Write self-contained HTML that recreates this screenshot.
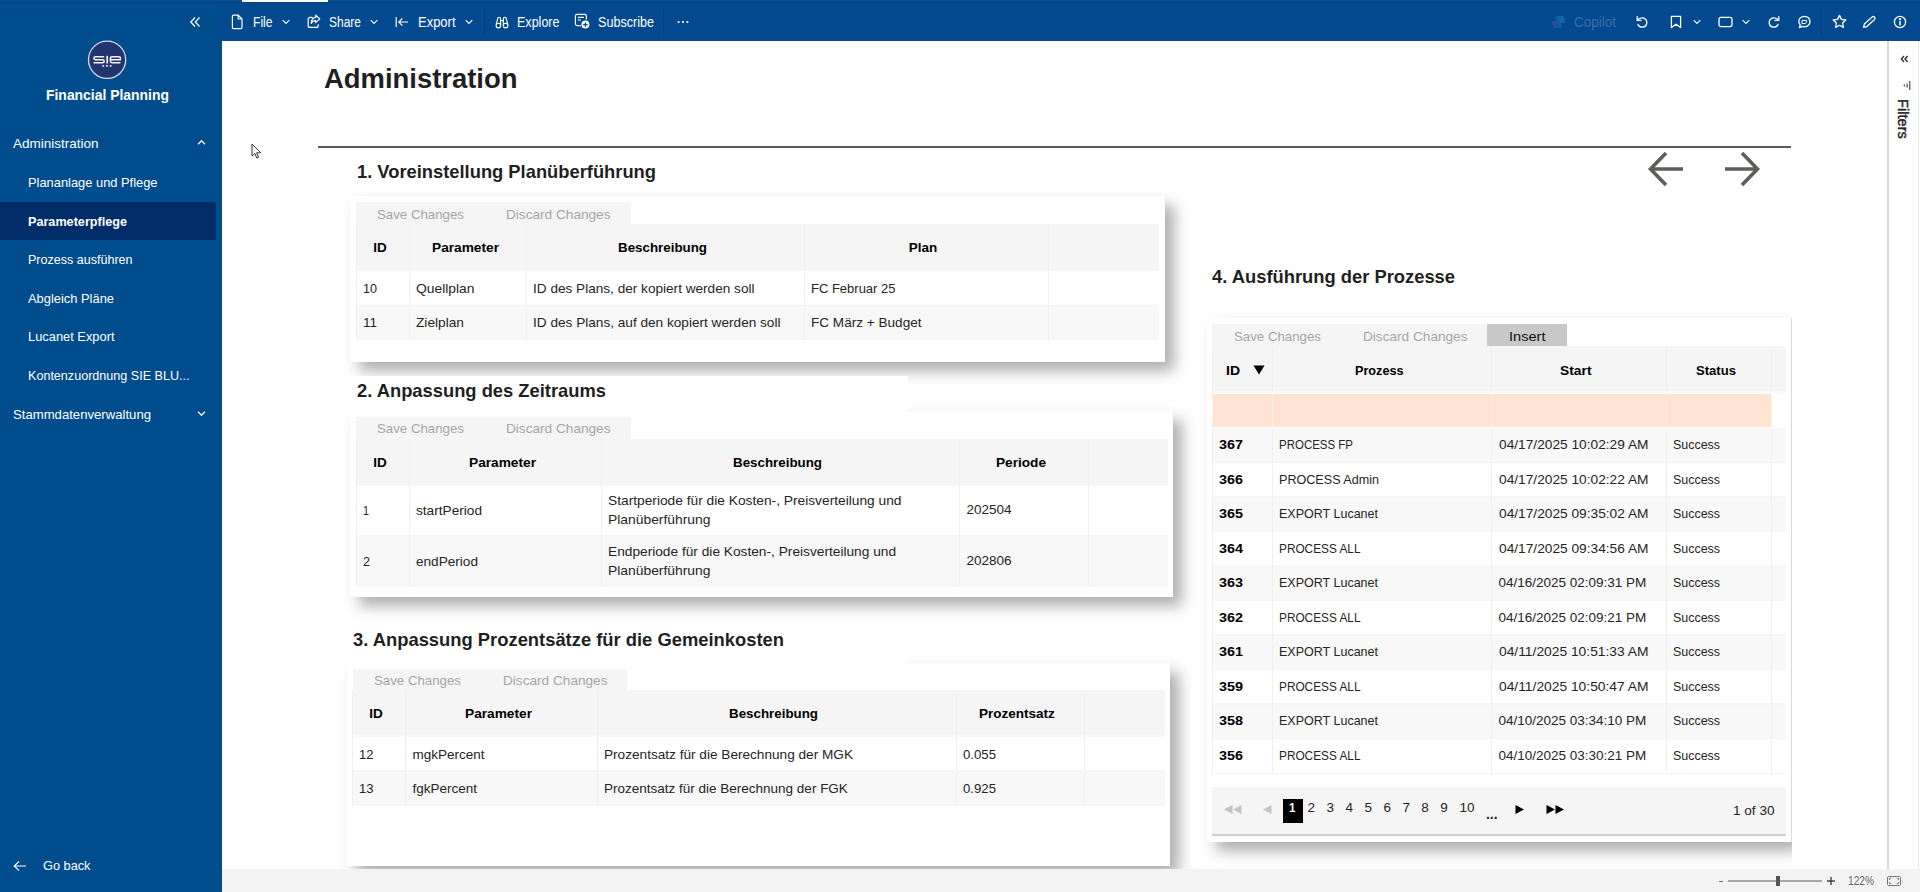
<!DOCTYPE html>
<html><head><meta charset='utf-8'><title>Administration</title><style>
html,body{margin:0;padding:0}
body{width:1920px;height:892px;overflow:hidden;background:#fff;position:relative;font-family:"Liberation Sans",sans-serif;}
body div, body span, body svg{position:absolute;}
span{white-space:pre;transform-origin:0 50%;}
</style></head>
<body>
<div style='left:0px;top:0px;width:222px;height:892px;background:#004c8c;'></div>
<div style='left:220.5px;top:0px;width:1.5px;height:892px;background:#02498f;'></div>
<div style='left:222px;top:0px;width:1698px;height:41px;background:#02498f;'></div>
<div style='left:0px;top:0px;width:1920px;height:2px;background:#004e8f;'></div>
<div style='left:0px;top:2px;width:1920px;height:1px;background:#0b3f78;'></div>
<div style='left:242px;top:0px;width:86px;height:2px;background:#fff;'></div>
<div style='left:222px;top:869px;width:1698px;height:23px;background:#f3f3f3;'></div>
<div style='left:1887px;top:41px;width:33px;height:828px;background:#fff;border-left:2px solid #d9d9d9;box-sizing:border-box;'></div>
<svg style='left:189px;top:16px' width='12' height='12' viewBox='0 0 12 12' fill='none' stroke='#fff' stroke-width='1.2'><path d='M6 1.5 L1.8 6 L6 10.5 M10.5 1.5 L6.3 6 L10.5 10.5'/></svg>
<svg style='left:87px;top:40px' width='40' height='40' viewBox='0 0 40 40' fill='none'><circle cx='20.1' cy='19.8' r='18.6' fill='#22356f' stroke='#d5dae6' stroke-width='1.3'/><g stroke='#f2f4f8' stroke-width='1.5' stroke-linecap='butt' stroke-linejoin='round'><path d='M17.2 16.7 H8.6 Q6.9 16.7 6.9 18.2 Q6.9 19.7 8.6 19.7 H15.4 Q17.2 19.7 17.2 21.2 Q17.2 22.7 15.4 22.7 H6.6'/><path d='M20.2 15.9 V23.5' stroke-width='1.7'/><path d='M23.4 19.7 H33.4 V18.4 Q33.4 16.7 31.6 16.7 H25.2 Q23.4 16.7 23.4 18.4 V21 Q23.4 22.7 25.2 22.7 H33.4'/></g><path d='M15.4 25 h1.7 v1.8 h-1.7z M19.1 25 h1.7 v1.8 h-1.7z M22.8 25 h1.7 v1.8 h-1.7z' fill='#e6e9f0'/></svg>
<div style='left:0px;top:202px;width:216px;height:38px;background:#002d68;'></div>
<svg style='left:197px;top:139.4px' width='9' height='7' viewBox='0 0 9 7' fill='none' stroke='#f0f4fa' stroke-width='1.35'><path d='M1 5.2 L4.5 1.7 L8 5.2'/></svg>
<svg style='left:197px;top:410.4px' width='9' height='7' viewBox='0 0 9 7' fill='none' stroke='#f0f4fa' stroke-width='1.35'><path d='M1 1.7 L4.5 5.2 L8 1.7'/></svg>
<svg style='left:13px;top:859.5px' width='14' height='12' viewBox='0 0 14 12' fill='none' stroke='#fff' stroke-width='1.2'><path d='M13 6 H1.5 M6 1.3 L1.3 6 L6 10.7'/></svg>
<svg style='left:231px;top:14px' width='13' height='16' viewBox='0 0 13 16' fill='none' stroke='#fff' stroke-width='1.2' stroke-linejoin='round'><path d='M2.6 1.2 H7.2 L11 5 V13.4 Q11 14.6 9.8 14.6 H2.6 Q1.4 14.6 1.4 13.4 V2.4 Q1.4 1.2 2.6 1.2 Z M7.2 1.2 V5 H11'/></svg>
<svg style='left:282px;top:19px' width='8' height='6' viewBox='0 0 8 6' fill='none' stroke='#fff' stroke-width='1.1'><path d='M0.7 1.2 L4 4.5 L7.3 1.2'/></svg>
<svg style='left:307px;top:14px' width='14' height='15' viewBox='0 0 14 15' fill='none' stroke='#fff' stroke-width='1.2' stroke-linejoin='round' stroke-linecap='round'><path d='M5.2 3.4 H3.2 Q1.2 3.4 1.2 5.4 V11.4 Q1.2 13.4 3.2 13.4 H9.2 Q11.2 13.4 11.2 11.4 V10.6'/><path d='M8.6 1.2 L12.8 4.9 L8.6 8.6 V6.6 Q5.6 6.4 4.2 9.4 Q4.4 4 8.6 3.4 Z'/></svg>
<svg style='left:370px;top:19px' width='8' height='6' viewBox='0 0 8 6' fill='none' stroke='#fff' stroke-width='1.1'><path d='M0.7 1.2 L4 4.5 L7.3 1.2'/></svg>
<svg style='left:395px;top:16px' width='14' height='12' viewBox='0 0 14 12' fill='none' stroke='#fff' stroke-width='1.2'><path d='M1.2 1 V11 M13 6 H4 M7.4 2.4 L3.8 6 L7.4 9.6'/></svg>
<svg style='left:465px;top:19px' width='8' height='6' viewBox='0 0 8 6' fill='none' stroke='#fff' stroke-width='1.1'><path d='M0.7 1.2 L4 4.5 L7.3 1.2'/></svg>
<div style='left:484px;top:8px;width:1px;height:27px;background:#0a3a78;'></div>
<svg style='left:495px;top:16px' width='14' height='13' viewBox='0 0 14 13' fill='none' stroke='#fff' stroke-width='1.1'><path d='M4.2 1.4 Q5.6 1.4 5.6 2.8 V9.6 M9.8 1.4 Q8.4 1.4 8.4 2.8 V9.6 M5.6 4.6 H8.4'/><path d='M4.2 1.4 Q2.8 1.4 2.6 3 L1.2 8.4 M9.8 1.4 Q11.2 1.4 11.4 3 L12.8 8.4'/><circle cx='3.4' cy='9.6' r='2.3'/><circle cx='10.6' cy='9.6' r='2.3'/></svg>
<svg style='left:574px;top:13px' width='17' height='17' viewBox='0 0 17 17' fill='none' stroke='#fff' stroke-width='1.2'><path d='M7 12.6 H3.2 Q1.4 12.6 1.4 10.8 V3.2 Q1.4 1.4 3.2 1.4 H10.6 Q12.4 1.4 12.4 3.2 V6.4'/><path d='M3.8 4.4 H10 M3.8 7 H7'/><circle cx='11.4' cy='11.6' r='4' fill='#fff' stroke='none'/><path d='M11.4 9.4 V13.8 M9.2 11.6 H13.6' stroke='#02498f' stroke-width='1.3'/></svg>
<div style='left:663px;top:8px;width:1px;height:27px;background:#0a3a78;'></div>
<svg style='left:677px;top:20px' width='12' height='4' viewBox='0 0 12 4' fill='#fff'><circle cx='1.6' cy='2' r='1.1'/><circle cx='6' cy='2' r='1.1'/><circle cx='10.4' cy='2' r='1.1'/></svg>
<svg style='left:1551px;top:15px;opacity:.35' width='15' height='14' viewBox='0 0 15 14'><path d='M4 1 H8 L11 13 H7 Z' fill='#2a78c8'/><path d='M7 1 H11 Q12.6 1 13 2.6 L14 6 Q14.4 8 12.4 8 H9.4 Z' fill='#3a9ad8'/><path d='M1 8 Q.6 6 2.6 6 H5.6 L8 13 H4 Q2.4 13 2 11.4 Z' fill='#6a58c8'/></svg>
<svg style='left:1635px;top:15px' width='14' height='14' viewBox='0 0 14 14' fill='none' stroke='#fff' stroke-width='1.3' stroke-linecap='round' stroke-linejoin='round'><path d='M2.2 1.6 V5.4 H6 M2.4 5.2 Q4.4 2.6 7.4 2.8 Q11.8 3.4 11.8 7.6 Q11.6 11.8 7.4 12.2 Q4.2 12.2 3 9.4'/></svg>
<svg style='left:1670px;top:15px' width='12' height='14' viewBox='0 0 12 14' fill='none' stroke='#fff' stroke-width='1.3' stroke-linecap='round' stroke-linejoin='round'><path d='M1.4 1.4 H10.6 V12.6 L6 9.2 L1.4 12.6 Z'/></svg>
<svg style='left:1693px;top:19px' width='8' height='6' viewBox='0 0 8 6' fill='none' stroke='#fff' stroke-width='1.1'><path d='M0.7 1.2 L4 4.5 L7.3 1.2'/></svg>
<svg style='left:1718px;top:16px' width='15' height='12' viewBox='0 0 15 12' fill='none' stroke='#fff' stroke-width='1.3' stroke-linecap='round' stroke-linejoin='round'><rect x='1' y='1.4' width='13' height='9.2' rx='2'/></svg>
<svg style='left:1742px;top:19px' width='8' height='6' viewBox='0 0 8 6' fill='none' stroke='#fff' stroke-width='1.1'><path d='M0.7 1.2 L4 4.5 L7.3 1.2'/></svg>
<svg style='left:1767px;top:15px' width='14' height='14' viewBox='0 0 14 14' fill='none' stroke='#fff' stroke-width='1.3' stroke-linecap='round' stroke-linejoin='round'><path d='M11.8 1.6 V5.4 H8 M11.6 5.2 Q9.6 2.6 6.6 2.8 Q2.2 3.4 2.2 7.6 Q2.4 11.8 6.6 12.2 Q9.8 12.2 11 9.4'/></svg>
<svg style='left:1797px;top:15px' width='15' height='14' viewBox='0 0 15 14' fill='none' stroke='#fff' stroke-width='1.3' stroke-linecap='round' stroke-linejoin='round'><path d='M2.4 12.6 L3.2 9.8 Q1.6 8 1.8 6 Q2.6 1.6 7.4 1.4 Q12.6 1.6 13 6.6 Q12.6 11.4 7.4 11.8 Q6 11.8 5 11.4 Z'/><path d='M5.4 5.4 H9.6 V7.2 L8 8.6 H5.4 Z' stroke-width='1'/></svg>
<div style='left:1821px;top:8px;width:1px;height:27px;background:#0a3a78;'></div>
<svg style='left:1832px;top:14px' width='15' height='15' viewBox='0 0 15 15' fill='none' stroke='#fff' stroke-width='1.3' stroke-linecap='round' stroke-linejoin='round'><path d='M7.5 1.4 L9.4 5.4 L13.8 6 L10.6 9 L11.4 13.4 L7.5 11.3 L3.6 13.4 L4.4 9 L1.2 6 L5.6 5.4 Z'/></svg>
<svg style='left:1862px;top:15px' width='15' height='14' viewBox='0 0 15 14' fill='none' stroke='#fff' stroke-width='1.3' stroke-linecap='round' stroke-linejoin='round'><path d='M1.6 12.4 L2.4 9 L10.4 1.8 Q11.6 1 12.6 2.2 Q13.6 3.4 12.6 4.4 L4.8 11.6 Z'/></svg>
<svg style='left:1893px;top:15px' width='14' height='14' viewBox='0 0 14 14' fill='none' stroke='#fff' stroke-width='1.3' stroke-linecap='round' stroke-linejoin='round'><circle cx='7' cy='7' r='5.6'/><path d='M7 6.4 V10' stroke-width='1.5'/><circle cx='7' cy='4.2' r='.5' fill='#fff'/></svg>
<svg style='left:1899.5px;top:54.5px' width='9' height='8' viewBox='0 0 9 8' fill='none' stroke='#333' stroke-width='1.4'><path d='M4 1 L1.4 4 L4 7 M7.6 1 L5 4 L7.6 7'/></svg>
<svg style='left:1901px;top:80px' width='11' height='11' viewBox='0 0 11 11' fill='none' stroke='#3a3a3a' stroke-width='1.1'><path d='M8.8 1 V10 M6.1 3.4 V7.6 M3.3 4.6 V6.4'/></svg>
<div style='left:1893px;top:99px;width:20px;height:41px;'><div style='position:absolute;left:10px;top:20px;transform:translate(-50%,-50%) rotate(90deg);font-size:14.5px;font-weight:400;color:#252423;white-space:nowrap;letter-spacing:0.05px;-webkit-text-stroke:.45px #252423;'>Filters</div></div>
<div style='left:1918px;top:41px;width:1px;height:828px;background:#e8e8e8;'></div>
<div style='left:1719px;top:880.5px;width:4px;height:1px;background:#666;'></div>
<div style='left:1728px;top:880px;width:94px;height:1.5px;background:#a8a8a8;'></div>
<div style='left:1776px;top:876px;width:4px;height:10px;background:#555;'></div>
<svg style='left:1827px;top:877px' width='8' height='8' viewBox='0 0 8 8' stroke='#444' stroke-width='1.4'><path d='M0 4 H8 M4 0 V8'/></svg>
<svg style='left:1887px;top:876px' width='14' height='10' viewBox='0 0 14 10' fill='none' stroke='#777' stroke-width='1'><rect x='.5' y='.5' width='13' height='9' rx='1'/><path d='M2.4 4 V2.4 H4.2 M9.8 2.4 H11.6 V4 M11.6 6 V7.6 H9.8 M4.2 7.6 H2.4 V6'/></svg>
<div id='canvas' style='left:222px;top:41px;width:1570px;height:828px;overflow:hidden'>
<div style='left:96px;top:105px;width:1473px;height:2px;background:#5a5a5a;'></div>
<svg style='left:1423.7px;top:108.9px' width='40' height='38' viewBox='0 0 40 38' fill='none' stroke='#605e5c' stroke-width='3.6'><path d='M37 19 H5 M20 3 L4.5 19 L20 35'/></svg>
<svg style='left:1500px;top:108.9px' width='40' height='38' viewBox='0 0 40 38' fill='none' stroke='#605e5c' stroke-width='3.6'><path d='M3 19 H35 M20 3 L35.5 19 L20 35'/></svg>
<div style='left:128px;top:155px;width:815px;height:166px;background:#fff;box-shadow:9px 9px 14px rgba(0,0,0,.32);'></div>
<div style='left:134px;top:161px;width:275px;height:22px;background:#f5f5f5;'></div>
<div style='left:134px;top:183px;width:803px;height:46px;background:#f5f5f5;'></div>
<div style='left:134px;top:230px;width:803px;height:34px;background:#fff;'></div>
<div style='left:134px;top:265px;width:803px;height:33px;background:#f8f8f8;'></div>
<div style='left:186.5px;top:183px;width:1px;height:46px;background:#efefef;'></div>
<div style='left:186.5px;top:229px;width:1.2px;height:69px;background:#f0f0f0;'></div>
<div style='left:303.5px;top:183px;width:1px;height:46px;background:#efefef;'></div>
<div style='left:303.5px;top:229px;width:1.2px;height:69px;background:#f0f0f0;'></div>
<div style='left:581.5px;top:183px;width:1px;height:46px;background:#efefef;'></div>
<div style='left:581.5px;top:229px;width:1.2px;height:69px;background:#f0f0f0;'></div>
<div style='left:825.5px;top:183px;width:1px;height:46px;background:#efefef;'></div>
<div style='left:825.5px;top:229px;width:1.2px;height:69px;background:#f0f0f0;'></div>
<div style='left:134px;top:228.5px;width:803px;height:1.5px;background:#f8f8f8;'></div>
<div style='left:134px;top:263.5px;width:803px;height:1.5px;background:#f6f6f6;'></div>
<div style='left:134px;top:297.5px;width:803px;height:1.5px;background:#f6f6f6;'></div>
<div style='left:133.5px;top:183px;width:1px;height:115px;background:#f0f0f0;'></div>
<div style='left:128px;top:370px;width:823px;height:186px;background:#fff;box-shadow:9px 9px 14px rgba(0,0,0,.32);'></div>
<div style='left:128px;top:335px;width:558px;height:35px;background:#fff;'></div>
<div style='left:134px;top:376px;width:275px;height:22px;background:#f5f5f5;'></div>
<div style='left:134px;top:398px;width:812px;height:46px;background:#f5f5f5;'></div>
<div style='left:134px;top:445px;width:812px;height:49px;background:#fff;'></div>
<div style='left:134px;top:495px;width:812px;height:49.5px;background:#f8f8f8;'></div>
<div style='left:186.5px;top:398px;width:1px;height:46px;background:#efefef;'></div>
<div style='left:186.5px;top:444px;width:1.2px;height:100.5px;background:#f0f0f0;'></div>
<div style='left:379.0px;top:398px;width:1px;height:46px;background:#efefef;'></div>
<div style='left:379.0px;top:444px;width:1.2px;height:100.5px;background:#f0f0f0;'></div>
<div style='left:737.0px;top:398px;width:1px;height:46px;background:#efefef;'></div>
<div style='left:737.0px;top:444px;width:1.2px;height:100.5px;background:#f0f0f0;'></div>
<div style='left:865.5px;top:398px;width:1px;height:46px;background:#efefef;'></div>
<div style='left:865.5px;top:444px;width:1.2px;height:100.5px;background:#f0f0f0;'></div>
<div style='left:134px;top:443.5px;width:812px;height:1.5px;background:#f8f8f8;'></div>
<div style='left:134px;top:493.5px;width:812px;height:1.5px;background:#f6f6f6;'></div>
<div style='left:134px;top:544.0px;width:812px;height:1.5px;background:#f6f6f6;'></div>
<div style='left:133.5px;top:398px;width:1px;height:146.5px;background:#f0f0f0;'></div>
<div style='left:124.5px;top:622px;width:823px;height:202.5px;background:#fff;box-shadow:9px 9px 14px rgba(0,0,0,.32);'></div>
<div style='left:124.5px;top:587px;width:560px;height:35px;background:#fff;'></div>
<div style='left:130.5px;top:628px;width:274.5px;height:20.5px;background:#f5f5f5;'></div>
<div style='left:130.5px;top:648.5px;width:812.0px;height:46.0px;background:#f5f5f5;'></div>
<div style='left:130.5px;top:695.5px;width:812.0px;height:34.0px;background:#fff;'></div>
<div style='left:130.5px;top:730.5px;width:812.0px;height:33.0px;background:#f8f8f8;'></div>
<div style='left:182.5px;top:648.5px;width:1px;height:46.0px;background:#efefef;'></div>
<div style='left:182.5px;top:694.5px;width:1.2px;height:69.0px;background:#f0f0f0;'></div>
<div style='left:375.0px;top:648.5px;width:1px;height:46.0px;background:#efefef;'></div>
<div style='left:375.0px;top:694.5px;width:1.2px;height:69.0px;background:#f0f0f0;'></div>
<div style='left:734.0px;top:648.5px;width:1px;height:46.0px;background:#efefef;'></div>
<div style='left:734.0px;top:694.5px;width:1.2px;height:69.0px;background:#f0f0f0;'></div>
<div style='left:861.5px;top:648.5px;width:1px;height:46.0px;background:#efefef;'></div>
<div style='left:861.5px;top:694.5px;width:1.2px;height:69.0px;background:#f0f0f0;'></div>
<div style='left:130.5px;top:694.0px;width:812.0px;height:1.5px;background:#f8f8f8;'></div>
<div style='left:130.5px;top:729.0px;width:812.0px;height:1.5px;background:#f6f6f6;'></div>
<div style='left:130.5px;top:763.0px;width:812.0px;height:1.5px;background:#f6f6f6;'></div>
<div style='left:130.0px;top:648.5px;width:1px;height:115.0px;background:#f0f0f0;'></div>
<div style='left:985px;top:277px;width:584.5px;height:524px;background:#fff;box-shadow:9px 9px 14px rgba(0,0,0,.32);'></div>
<div style='left:1569.3px;top:277px;width:0.9px;height:524px;background:#dadada;'></div>
<div style='left:990px;top:283px;width:275px;height:22.5px;background:#f5f5f5;'></div>
<div style='left:1265px;top:283px;width:80px;height:22.5px;background:#c8c8c8;'></div>
<div style='left:990px;top:305px;width:573.5px;height:45.5px;background:#f5f5f5;'></div>
<div style='left:990px;top:352.5px;width:559.5px;height:33.5px;background:#ffe4d4;'></div>
<div style='left:990px;top:387.5px;width:573.5px;height:33.55000000000001px;background:#f8f8f8;'></div>
<div style='left:990px;top:420.55px;width:573.5px;height:1.5px;background:#f6f6f6;'></div>
<div style='left:990px;top:422.05px;width:573.5px;height:33.55000000000001px;background:#fff;'></div>
<div style='left:990px;top:455.1px;width:573.5px;height:1.5px;background:#f6f6f6;'></div>
<div style='left:990px;top:456.6px;width:573.5px;height:33.549999999999955px;background:#f8f8f8;'></div>
<div style='left:990px;top:489.65px;width:573.5px;height:1.5px;background:#f6f6f6;'></div>
<div style='left:990px;top:491.15px;width:573.5px;height:33.55000000000007px;background:#fff;'></div>
<div style='left:990px;top:524.2px;width:573.5px;height:1.5px;background:#f6f6f6;'></div>
<div style='left:990px;top:525.7px;width:573.5px;height:33.549999999999955px;background:#f8f8f8;'></div>
<div style='left:990px;top:558.75px;width:573.5px;height:1.5px;background:#f6f6f6;'></div>
<div style='left:990px;top:560.25px;width:573.5px;height:33.549999999999955px;background:#fff;'></div>
<div style='left:990px;top:593.3px;width:573.5px;height:1.5px;background:#f6f6f6;'></div>
<div style='left:990px;top:594.8px;width:573.5px;height:33.549999999999955px;background:#f8f8f8;'></div>
<div style='left:990px;top:627.8499999999999px;width:573.5px;height:1.5px;background:#f6f6f6;'></div>
<div style='left:990px;top:629.3499999999999px;width:573.5px;height:33.55000000000007px;background:#fff;'></div>
<div style='left:990px;top:662.4px;width:573.5px;height:1.5px;background:#f6f6f6;'></div>
<div style='left:990px;top:663.9px;width:573.5px;height:33.55000000000007px;background:#f8f8f8;'></div>
<div style='left:990px;top:696.95px;width:573.5px;height:1.5px;background:#f6f6f6;'></div>
<div style='left:990px;top:698.45px;width:573.5px;height:33.549999999999955px;background:#fff;'></div>
<div style='left:990px;top:731.5px;width:573.5px;height:1.5px;background:#f6f6f6;'></div>
<div style='left:1049.5px;top:305px;width:1px;height:45.5px;background:#efefef;'></div>
<div style='left:1049.5px;top:352px;width:1.2px;height:34px;background:#fff0e6;'></div>
<div style='left:1049.5px;top:387px;width:1.2px;height:345.0px;background:#f0f0f0;'></div>
<div style='left:1269.0px;top:305px;width:1px;height:45.5px;background:#efefef;'></div>
<div style='left:1269.0px;top:352px;width:1.2px;height:34px;background:#fff0e6;'></div>
<div style='left:1269.0px;top:387px;width:1.2px;height:345.0px;background:#f0f0f0;'></div>
<div style='left:1444.0px;top:305px;width:1px;height:45.5px;background:#efefef;'></div>
<div style='left:1444.0px;top:352px;width:1.2px;height:34px;background:#fff0e6;'></div>
<div style='left:1444.0px;top:387px;width:1.2px;height:345.0px;background:#f0f0f0;'></div>
<div style='left:1549.0px;top:305px;width:1px;height:45.5px;background:#efefef;'></div>
<div style='left:1549.0px;top:352px;width:1.2px;height:34px;background:#fff0e6;'></div>
<div style='left:1549.0px;top:387px;width:1.2px;height:345.0px;background:#f0f0f0;'></div>
<div style='left:990px;top:350px;width:573.5px;height:2.5px;background:#fafafa;'></div>
<div style='left:990px;top:386px;width:573.5px;height:1.5px;background:#fafafa;'></div>
<div style='left:989.5px;top:305px;width:1px;height:427.0px;background:#f0f0f0;'></div>
<svg style='left:1031px;top:324px' width='12' height='10' viewBox='0 0 12 10'><path d='M0.5 0.5 H11.5 L6 9.5 Z' fill='#000'/></svg>
<div style='left:990px;top:746px;width:573.5px;height:46.5px;background:#f5f5f5;border-bottom:2px solid #cfcfcf;box-sizing:content-box;'></div>
<svg style='left:1001.5px;top:764px' width='18' height='9' viewBox='0 0 18 9' fill='#c4c4c4'><path d='M8.5 0 V9 L0 4.5 Z M17.5 0 V9 L9 4.5 Z'/></svg>
<svg style='left:1041px;top:764px' width='9' height='9' viewBox='0 0 9 9' fill='#c4c4c4'><path d='M8.5 0 V9 L0 4.5 Z'/></svg>
<div style='left:1061px;top:757.5px;width:19.5px;height:24.5px;background:#000;'></div>
<svg style='left:1292.5px;top:764px' width='9' height='9' viewBox='0 0 9 9' fill='#000'><path d='M0.5 0 V9 L9 4.5 Z'/></svg>
<svg style='left:1323.5px;top:764px' width='18' height='9' viewBox='0 0 18 9' fill='#000'><path d='M0.5 0 V9 L9 4.5 Z M9.5 0 V9 L18 4.5 Z'/></svg>
<span style='left:102.00px;top:20.00px;line-height:36px;font-size:28px;font-weight:700;color:#1f1f1f;transform:scaleX(0.9794);'>Administration</span>
<span style='left:134.50px;top:119.00px;line-height:24px;font-size:18.5px;font-weight:700;color:#1f1f1f;transform:scaleX(0.9905);'>1. Voreinstellung Planüberführung</span>
<span style='left:155.00px;top:164.60px;line-height:18px;font-size:13.5px;font-weight:400;color:#a6a6a6;transform:scaleX(0.9824);'>Save Changes</span>
<span style='left:284.00px;top:164.60px;line-height:18px;font-size:13.5px;font-weight:400;color:#a6a6a6;transform:scaleX(1.0091);'>Discard Changes</span>
<span style='left:151.25px;top:198.20px;line-height:18px;font-size:13.5px;font-weight:700;color:#000;'>ID</span>
<span style='left:209.50px;top:198.20px;line-height:18px;font-size:13.5px;font-weight:700;color:#000;transform:scaleX(1.0144);'>Parameter</span>
<span style='left:396.00px;top:198.20px;line-height:18px;font-size:13.5px;font-weight:700;color:#000;transform:scaleX(0.9885);'>Beschreibung</span>
<span style='left:686.75px;top:198.20px;line-height:18px;font-size:13.5px;font-weight:700;color:#000;'>Plan</span>
<span style='left:141.00px;top:238.50px;line-height:18px;font-size:13.5px;font-weight:400;color:#252423;transform:scaleX(0.9314);'>10</span>
<span style='left:194.00px;top:238.50px;line-height:18px;font-size:13.5px;font-weight:400;color:#252423;transform:scaleX(1.0255);'>Quellplan</span>
<span style='left:311.00px;top:238.50px;line-height:18px;font-size:13.5px;font-weight:400;color:#252423;transform:scaleX(1.0075);'>ID des Plans, der kopiert werden soll</span>
<span style='left:589.00px;top:238.50px;line-height:18px;font-size:13.5px;font-weight:400;color:#252423;transform:scaleX(0.9624);'>FC Februar 25</span>
<span style='left:141.00px;top:272.50px;line-height:18px;font-size:13.5px;font-weight:400;color:#252423;'>11</span>
<span style='left:194.00px;top:272.50px;line-height:18px;font-size:13.5px;font-weight:400;color:#252423;transform:scaleX(1.0152);'>Zielplan</span>
<span style='left:311.00px;top:272.50px;line-height:18px;font-size:13.5px;font-weight:400;color:#252423;transform:scaleX(1.0086);'>ID des Plans, auf den kopiert werden soll</span>
<span style='left:589.00px;top:272.50px;line-height:18px;font-size:13.5px;font-weight:400;color:#252423;transform:scaleX(1.0053);'>FC März + Budget</span>
<span style='left:134.50px;top:338.00px;line-height:24px;font-size:18.5px;font-weight:700;color:#1f1f1f;transform:scaleX(0.9913);'>2. Anpassung des Zeitraums</span>
<span style='left:155.00px;top:379.10px;line-height:18px;font-size:13.5px;font-weight:400;color:#a6a6a6;transform:scaleX(0.9824);'>Save Changes</span>
<span style='left:284.00px;top:379.10px;line-height:18px;font-size:13.5px;font-weight:400;color:#a6a6a6;transform:scaleX(1.0091);'>Discard Changes</span>
<span style='left:151.25px;top:413.20px;line-height:18px;font-size:13.5px;font-weight:700;color:#000;'>ID</span>
<span style='left:246.50px;top:413.20px;line-height:18px;font-size:13.5px;font-weight:700;color:#000;transform:scaleX(1.0144);'>Parameter</span>
<span style='left:511.00px;top:413.20px;line-height:18px;font-size:13.5px;font-weight:700;color:#000;transform:scaleX(0.9885);'>Beschreibung</span>
<span style='left:774.00px;top:413.20px;line-height:18px;font-size:13.5px;font-weight:700;color:#000;transform:scaleX(1.0095);'>Periode</span>
<span style='left:141.00px;top:460.50px;line-height:18px;font-size:13.5px;font-weight:400;color:#252423;transform:scaleX(0.7983);'>1</span>
<span style='left:194.00px;top:460.50px;line-height:18px;font-size:13.5px;font-weight:400;color:#252423;transform:scaleX(1.0110);'>startPeriod</span>
<span style='left:385.50px;top:451.00px;line-height:18px;font-size:13.5px;font-weight:400;color:#252423;transform:scaleX(1.0185);'>Startperiode für die Kosten-, Preisverteilung und</span>
<span style='left:385.50px;top:470.00px;line-height:18px;font-size:13.5px;font-weight:400;color:#252423;transform:scaleX(1.0268);'>Planüberführung</span>
<span style='left:744.50px;top:459.80px;line-height:18px;font-size:13.5px;font-weight:400;color:#252423;'>202504</span>
<span style='left:141.00px;top:511.50px;line-height:18px;font-size:13.5px;font-weight:400;color:#252423;transform:scaleX(0.9314);'>2</span>
<span style='left:194.00px;top:511.50px;line-height:18px;font-size:13.5px;font-weight:400;color:#252423;transform:scaleX(1.0071);'>endPeriod</span>
<span style='left:385.50px;top:501.50px;line-height:18px;font-size:13.5px;font-weight:400;color:#252423;transform:scaleX(1.0153);'>Endperiode für die Kosten-, Preisverteilung und</span>
<span style='left:385.50px;top:520.50px;line-height:18px;font-size:13.5px;font-weight:400;color:#252423;transform:scaleX(1.0268);'>Planüberführung</span>
<span style='left:744.50px;top:510.80px;line-height:18px;font-size:13.5px;font-weight:400;color:#252423;'>202806</span>
<span style='left:130.50px;top:586.50px;line-height:24px;font-size:18.5px;font-weight:700;color:#1f1f1f;transform:scaleX(0.9927);'>3. Anpassung Prozentsätze für die Gemeinkosten</span>
<span style='left:151.50px;top:630.60px;line-height:18px;font-size:13.5px;font-weight:400;color:#a6a6a6;transform:scaleX(0.9824);'>Save Changes</span>
<span style='left:280.50px;top:630.60px;line-height:18px;font-size:13.5px;font-weight:400;color:#a6a6a6;transform:scaleX(1.0091);'>Discard Changes</span>
<span style='left:147.25px;top:664.20px;line-height:18px;font-size:13.5px;font-weight:700;color:#000;'>ID</span>
<span style='left:243.00px;top:664.20px;line-height:18px;font-size:13.5px;font-weight:700;color:#000;transform:scaleX(1.0144);'>Parameter</span>
<span style='left:507.00px;top:664.20px;line-height:18px;font-size:13.5px;font-weight:700;color:#000;transform:scaleX(0.9885);'>Beschreibung</span>
<span style='left:757.00px;top:664.20px;line-height:18px;font-size:13.5px;font-weight:700;color:#000;'>Prozentsatz</span>
<span style='left:137.00px;top:704.50px;line-height:18px;font-size:13.5px;font-weight:400;color:#252423;transform:scaleX(0.9647);'>12</span>
<span style='left:190.50px;top:704.50px;line-height:18px;font-size:13.5px;font-weight:400;color:#252423;'>mgkPercent</span>
<span style='left:382.00px;top:704.50px;line-height:18px;font-size:13.5px;font-weight:400;color:#252423;transform:scaleX(1.0085);'>Prozentsatz für die Berechnung der MGK</span>
<span style='left:740.50px;top:704.50px;line-height:18px;font-size:13.5px;font-weight:400;color:#252423;transform:scaleX(0.9764);'>0.055</span>
<span style='left:137.00px;top:738.50px;line-height:18px;font-size:13.5px;font-weight:400;color:#252423;transform:scaleX(0.9647);'>13</span>
<span style='left:190.50px;top:738.50px;line-height:18px;font-size:13.5px;font-weight:400;color:#252423;'>fgkPercent</span>
<span style='left:382.00px;top:738.50px;line-height:18px;font-size:13.5px;font-weight:400;color:#252423;'>Prozentsatz für die Berechnung der FGK</span>
<span style='left:740.50px;top:738.50px;line-height:18px;font-size:13.5px;font-weight:400;color:#252423;transform:scaleX(0.9764);'>0.925</span>
<span style='left:990.00px;top:224.00px;line-height:24px;font-size:18.5px;font-weight:700;color:#1f1f1f;transform:scaleX(0.9918);'>4. Ausführung der Prozesse</span>
<span style='left:1011.50px;top:286.70px;line-height:18px;font-size:13.5px;font-weight:400;color:#a6a6a6;transform:scaleX(0.9824);'>Save Changes</span>
<span style='left:1140.50px;top:286.70px;line-height:18px;font-size:13.5px;font-weight:400;color:#a6a6a6;transform:scaleX(1.0091);'>Discard Changes</span>
<span style='left:1287.00px;top:286.70px;line-height:18px;font-size:13.5px;font-weight:400;color:#111;transform:scaleX(1.0810);'>Insert</span>
<span style='left:1004.00px;top:320.60px;line-height:18px;font-size:13.5px;font-weight:700;color:#000;transform:scaleX(1.0370);'>ID</span>
<span style='left:1132.75px;top:320.60px;line-height:18px;font-size:13.5px;font-weight:700;color:#000;transform:scaleX(0.9366);'>Prozess</span>
<span style='left:1338.25px;top:320.60px;line-height:18px;font-size:13.5px;font-weight:700;color:#000;transform:scaleX(1.0239);'>Start</span>
<span style='left:1474.00px;top:320.60px;line-height:18px;font-size:13.5px;font-weight:700;color:#000;transform:scaleX(0.9693);'>Status</span>
<span style='left:996.50px;top:395.00px;line-height:18px;font-size:13.5px;font-weight:700;color:#000;transform:scaleX(1.0652);'>367</span>
<span style='left:1056.50px;top:395.00px;line-height:18px;font-size:13.5px;font-weight:400;color:#252423;transform:scaleX(0.8503);'>PROCESS FP</span>
<span style='left:1276.50px;top:395.00px;line-height:18px;font-size:13.5px;font-weight:400;color:#252423;transform:scaleX(1.0161);'>04/17/2025 10:02:29 AM</span>
<span style='left:1451.00px;top:395.00px;line-height:18px;font-size:13.5px;font-weight:400;color:#252423;transform:scaleX(0.9210);'>Success</span>
<span style='left:996.50px;top:429.55px;line-height:18px;font-size:13.5px;font-weight:700;color:#000;transform:scaleX(1.0652);'>366</span>
<span style='left:1056.50px;top:429.55px;line-height:18px;font-size:13.5px;font-weight:400;color:#252423;transform:scaleX(0.9320);'>PROCESS Admin</span>
<span style='left:1276.50px;top:429.55px;line-height:18px;font-size:13.5px;font-weight:400;color:#252423;transform:scaleX(1.0161);'>04/17/2025 10:02:22 AM</span>
<span style='left:1451.00px;top:429.55px;line-height:18px;font-size:13.5px;font-weight:400;color:#252423;transform:scaleX(0.9210);'>Success</span>
<span style='left:996.50px;top:464.10px;line-height:18px;font-size:13.5px;font-weight:700;color:#000;transform:scaleX(1.0652);'>365</span>
<span style='left:1056.50px;top:464.10px;line-height:18px;font-size:13.5px;font-weight:400;color:#252423;transform:scaleX(0.9267);'>EXPORT Lucanet</span>
<span style='left:1276.50px;top:464.10px;line-height:18px;font-size:13.5px;font-weight:400;color:#252423;transform:scaleX(1.0161);'>04/17/2025 09:35:02 AM</span>
<span style='left:1451.00px;top:464.10px;line-height:18px;font-size:13.5px;font-weight:400;color:#252423;transform:scaleX(0.9210);'>Success</span>
<span style='left:996.50px;top:498.65px;line-height:18px;font-size:13.5px;font-weight:700;color:#000;transform:scaleX(1.0652);'>364</span>
<span style='left:1056.50px;top:498.65px;line-height:18px;font-size:13.5px;font-weight:400;color:#252423;transform:scaleX(0.8759);'>PROCESS ALL</span>
<span style='left:1276.50px;top:498.65px;line-height:18px;font-size:13.5px;font-weight:400;color:#252423;transform:scaleX(1.0161);'>04/17/2025 09:34:56 AM</span>
<span style='left:1451.00px;top:498.65px;line-height:18px;font-size:13.5px;font-weight:400;color:#252423;transform:scaleX(0.9210);'>Success</span>
<span style='left:996.50px;top:533.20px;line-height:18px;font-size:13.5px;font-weight:700;color:#000;transform:scaleX(1.0652);'>363</span>
<span style='left:1056.50px;top:533.20px;line-height:18px;font-size:13.5px;font-weight:400;color:#252423;transform:scaleX(0.9267);'>EXPORT Lucanet</span>
<span style='left:1276.50px;top:533.20px;line-height:18px;font-size:13.5px;font-weight:400;color:#252423;'>04/16/2025 02:09:31 PM</span>
<span style='left:1451.00px;top:533.20px;line-height:18px;font-size:13.5px;font-weight:400;color:#252423;transform:scaleX(0.9210);'>Success</span>
<span style='left:996.50px;top:567.75px;line-height:18px;font-size:13.5px;font-weight:700;color:#000;transform:scaleX(1.0652);'>362</span>
<span style='left:1056.50px;top:567.75px;line-height:18px;font-size:13.5px;font-weight:400;color:#252423;transform:scaleX(0.8759);'>PROCESS ALL</span>
<span style='left:1276.50px;top:567.75px;line-height:18px;font-size:13.5px;font-weight:400;color:#252423;'>04/16/2025 02:09:21 PM</span>
<span style='left:1451.00px;top:567.75px;line-height:18px;font-size:13.5px;font-weight:400;color:#252423;transform:scaleX(0.9210);'>Success</span>
<span style='left:996.50px;top:602.30px;line-height:18px;font-size:13.5px;font-weight:700;color:#000;transform:scaleX(1.0652);'>361</span>
<span style='left:1056.50px;top:602.30px;line-height:18px;font-size:13.5px;font-weight:400;color:#252423;transform:scaleX(0.9267);'>EXPORT Lucanet</span>
<span style='left:1276.50px;top:602.30px;line-height:18px;font-size:13.5px;font-weight:400;color:#252423;transform:scaleX(1.0231);'>04/11/2025 10:51:33 AM</span>
<span style='left:1451.00px;top:602.30px;line-height:18px;font-size:13.5px;font-weight:400;color:#252423;transform:scaleX(0.9210);'>Success</span>
<span style='left:996.50px;top:636.85px;line-height:18px;font-size:13.5px;font-weight:700;color:#000;transform:scaleX(1.0652);'>359</span>
<span style='left:1056.50px;top:636.85px;line-height:18px;font-size:13.5px;font-weight:400;color:#252423;transform:scaleX(0.8759);'>PROCESS ALL</span>
<span style='left:1276.50px;top:636.85px;line-height:18px;font-size:13.5px;font-weight:400;color:#252423;transform:scaleX(1.0231);'>04/11/2025 10:50:47 AM</span>
<span style='left:1451.00px;top:636.85px;line-height:18px;font-size:13.5px;font-weight:400;color:#252423;transform:scaleX(0.9210);'>Success</span>
<span style='left:996.50px;top:671.40px;line-height:18px;font-size:13.5px;font-weight:700;color:#000;transform:scaleX(1.0652);'>358</span>
<span style='left:1056.50px;top:671.40px;line-height:18px;font-size:13.5px;font-weight:400;color:#252423;transform:scaleX(0.9267);'>EXPORT Lucanet</span>
<span style='left:1276.50px;top:671.40px;line-height:18px;font-size:13.5px;font-weight:400;color:#252423;'>04/10/2025 03:34:10 PM</span>
<span style='left:1451.00px;top:671.40px;line-height:18px;font-size:13.5px;font-weight:400;color:#252423;transform:scaleX(0.9210);'>Success</span>
<span style='left:996.50px;top:705.95px;line-height:18px;font-size:13.5px;font-weight:700;color:#000;transform:scaleX(1.0652);'>356</span>
<span style='left:1056.50px;top:705.95px;line-height:18px;font-size:13.5px;font-weight:400;color:#252423;transform:scaleX(0.8759);'>PROCESS ALL</span>
<span style='left:1276.50px;top:705.95px;line-height:18px;font-size:13.5px;font-weight:400;color:#252423;'>04/10/2025 03:30:21 PM</span>
<span style='left:1451.00px;top:705.95px;line-height:18px;font-size:13.5px;font-weight:400;color:#252423;transform:scaleX(0.9210);'>Success</span>
<span style='left:1067.35px;top:758.00px;line-height:18px;font-size:13.5px;font-weight:700;color:#fff;transform:scaleX(0.8649);'>1</span>
<span style='left:1085.55px;top:757.80px;line-height:18px;font-size:13.5px;font-weight:400;color:#252423;'>2</span>
<span style='left:1104.55px;top:757.80px;line-height:18px;font-size:13.5px;font-weight:400;color:#252423;'>3</span>
<span style='left:1123.55px;top:757.80px;line-height:18px;font-size:13.5px;font-weight:400;color:#252423;'>4</span>
<span style='left:1142.45px;top:757.80px;line-height:18px;font-size:13.5px;font-weight:400;color:#252423;'>5</span>
<span style='left:1161.45px;top:757.80px;line-height:18px;font-size:13.5px;font-weight:400;color:#252423;'>6</span>
<span style='left:1180.45px;top:757.80px;line-height:18px;font-size:13.5px;font-weight:400;color:#252423;'>7</span>
<span style='left:1199.35px;top:757.80px;line-height:18px;font-size:13.5px;font-weight:400;color:#252423;'>8</span>
<span style='left:1218.35px;top:757.80px;line-height:18px;font-size:13.5px;font-weight:400;color:#252423;'>9</span>
<span style='left:1237.50px;top:757.80px;line-height:18px;font-size:13.5px;font-weight:400;color:#252423;'>10</span>
<span style='left:1264.05px;top:762.50px;line-height:20px;font-size:15px;font-weight:700;color:#252423;transform:scaleX(0.9189);'>...</span>
<span style='left:1510.50px;top:761.00px;line-height:18px;font-size:13.5px;font-weight:400;color:#252423;transform:scaleX(1.0049);'>1 of 30</span>
</div>
<svg style='left:251px;top:143px' width='12' height='17' viewBox='0 0 12 17'><path d='M1 1 V13 L3.8 10.4 L5.8 15 L7.6 14.2 L5.6 9.8 H9.6 Z' fill='#fff' stroke='#333' stroke-width='1'/></svg>
<span style='left:45.50px;top:85.00px;line-height:20px;font-size:15px;font-weight:700;color:#fff;transform:scaleX(0.9281);'>Financial Planning</span>
<span style='left:12.50px;top:135.10px;line-height:18px;font-size:13.6px;font-weight:400;color:#fff;transform:scaleX(0.9926);'>Administration</span>
<span style='left:27.50px;top:173.60px;line-height:18px;font-size:13.6px;font-weight:400;color:#fff;transform:scaleX(0.9466);'>Plananlage und Pflege</span>
<span style='left:27.50px;top:212.60px;line-height:18px;font-size:13.6px;font-weight:700;color:#fff;transform:scaleX(0.9292);'>Parameterpflege</span>
<span style='left:27.50px;top:251.10px;line-height:18px;font-size:13.6px;font-weight:400;color:#fff;transform:scaleX(0.9220);'>Prozess ausführen</span>
<span style='left:27.50px;top:289.60px;line-height:18px;font-size:13.6px;font-weight:400;color:#fff;transform:scaleX(0.9481);'>Abgleich Pläne</span>
<span style='left:27.50px;top:328.10px;line-height:18px;font-size:13.6px;font-weight:400;color:#fff;transform:scaleX(0.9458);'>Lucanet Export</span>
<span style='left:27.50px;top:367.10px;line-height:18px;font-size:13.6px;font-weight:400;color:#fff;transform:scaleX(0.9251);'>Kontenzuordnung SIE BLU...</span>
<span style='left:12.50px;top:405.60px;line-height:18px;font-size:13.6px;font-weight:400;color:#fff;transform:scaleX(0.9663);'>Stammdatenverwaltung</span>
<span style='left:42.50px;top:857.10px;line-height:18px;font-size:13.6px;font-weight:400;color:#fff;transform:scaleX(0.9383);'>Go back</span>
<span style='left:252.50px;top:13.80px;line-height:18px;font-size:13.8px;font-weight:400;color:#fff;transform:scaleX(0.8770);'>File</span>
<span style='left:329.00px;top:13.80px;line-height:18px;font-size:13.8px;font-weight:400;color:#fff;transform:scaleX(0.8689);'>Share</span>
<span style='left:418.00px;top:13.80px;line-height:18px;font-size:13.8px;font-weight:400;color:#fff;transform:scaleX(0.9404);'>Export</span>
<span style='left:517.00px;top:13.80px;line-height:18px;font-size:13.8px;font-weight:400;color:#fff;transform:scaleX(0.9085);'>Explore</span>
<span style='left:597.50px;top:13.80px;line-height:18px;font-size:13.8px;font-weight:400;color:#fff;transform:scaleX(0.9127);'>Subscribe</span>
<span style='left:1574.00px;top:13.80px;line-height:18px;font-size:13.8px;font-weight:400;color:#3e6ea8;transform:scaleX(0.9778);'>Copilot</span>
<span style='left:1848.00px;top:872.50px;line-height:16px;font-size:12px;font-weight:400;color:#666;transform:scaleX(0.8468);'>122%</span>
</body></html>
